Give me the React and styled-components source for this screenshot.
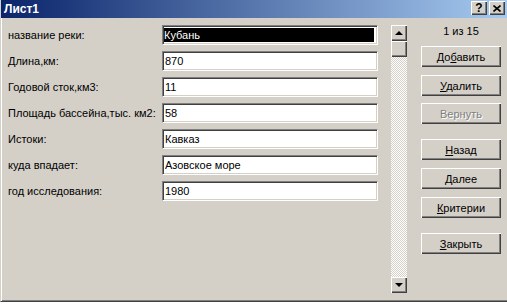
import styled, { createGlobalStyle } from "styled-components"

const GlobalStyle = createGlobalStyle`
  body {
    margin: 0;
    overflow: hidden;
    background: #ffffff;
    font-family: "Liberation Sans", Arial, sans-serif;
  }
`

const Window = styled.div`
  width: 507px;
  height: 302px;
  box-sizing: border-box;
  background: #d4d0c8;
  border-left: 1px solid #d4d0c8;
  border-bottom: 1px solid #404040;
  box-shadow: inset 1px 0 #ffffff, inset 0 -1px #808080;
  display: flex;
  flex-direction: column;
`

const TitleBar = styled.div`
  height: 18px;
  background: linear-gradient(to right, #0a246a, #a6caf0);
  display: flex;
  align-items: center;
  justify-content: space-between;
  padding: 0 2px 0 3px;
`

const Title = styled.span`
  color: #ffffff;
  font-weight: bold;
  font-size: 12px;
`

const TitleButtons = styled.div`
  display: flex;
  gap: 2px;
  margin-top: -2px;
`

const CapButton = styled.div`
  width: 16px;
  height: 14px;
  box-sizing: border-box;
  background: #d4d0c8;
  box-shadow: inset 1px 1px #ffffff, inset -1px -1px #404040, inset -2px -2px #808080;
  display: flex;
  align-items: center;
  justify-content: center;
  font-weight: bold;
  font-size: 12px;
  color: #000;
`

const Body = styled.div`
  flex: 1;
  display: flex;
  padding: 7px 0 0 7px;
`

const Form = styled.div`
  display: flex;
  flex-direction: column;
  gap: 6px;
  width: 371px;
`

const Row = styled.div`
  display: flex;
  align-items: center;
  height: 20px;
`

const Label = styled.span`
  width: 154px;
  font-size: 11px;
  color: #000;
  white-space: nowrap;
`

const Field = styled.div`
  width: 216px;
  height: 20px;
  box-sizing: border-box;
  background: #ffffff;
  border-top: 1px solid #808080;
  border-left: 1px solid #808080;
  border-bottom: 1px solid #ffffff;
  border-right: 1px solid #ffffff;
  box-shadow: inset 1px 1px #404040, inset -1px -1px #d4d0c8;
  padding: 2px 2px;
  font-size: 11px;
  line-height: 14px;
  color: #000;
`

const Selected = styled.div`
  background: #000000;
  color: #ffffff;
  height: 14px;
  margin: 0 0 0 -1px;
  width: 210px;
`

const ScrollBar = styled.div`
  width: 16px;
  height: 268px;
  margin-left: 12px;
  display: flex;
  flex-direction: column;
  background: repeating-conic-gradient(#ffffff 0 25%, #d4d0c8 0 50%) 0 0 / 2px 2px;
`

const ScrollBtn = styled.div`
  width: 16px;
  height: 16px;
  box-sizing: border-box;
  background: #d4d0c8;
  box-shadow: inset 1px 1px #ffffff, inset -1px -1px #404040, inset -2px -2px #808080;
  display: flex;
  align-items: center;
  justify-content: center;
`

const Track = styled.div`
  flex: 1;
`

const Arrow = styled.div`
  width: 0;
  height: 0;
  border-left: 4px solid transparent;
  border-right: 4px solid transparent;
  ${({ $down }) => ($down ? "border-top: 4px solid #000;" : "border-bottom: 4px solid #000;")}
`

const Side = styled.div`
  width: 80px;
  margin-left: 14px;
  display: flex;
  flex-direction: column;
`

const Counter = styled.div`
  height: 14px;
  text-align: center;
  font-size: 11px;
  margin-bottom: 7px;
`

const Button = styled.div`
  height: 21px;
  box-sizing: border-box;
  background: #d4d0c8;
  box-shadow: inset 1px 1px #ffffff, inset -1px -1px #404040, inset -2px -2px #808080;
  display: flex;
  align-items: center;
  justify-content: center;
  font-size: 11px;
  color: ${({ $disabled }) => ($disabled ? "#808080" : "#000")};
  text-shadow: ${({ $disabled }) => ($disabled ? "1px 1px #ffffff" : "none")};
  margin-bottom: ${({ $gap }) => $gap}px;
`

const Under = styled.span`
  text-decoration: underline;
`

const Sheet = styled.div`
  height: 2px;
  background: #ffffff;
`

const rows = [
  ["название реки:", "Кубань"],
  ["Длина,км:", "870"],
  ["Годовой сток,км3:", "11"],
  ["Площадь бассейна,тыс. км2:", "58"],
  ["Истоки:", "Кавказ"],
  ["куда впадает:", "Азовское море"],
  ["год исследования:", "1980"],
]

const buttons = [
  { pre: "До", u: "б", post: "авить", gap: 8 },
  { pre: "", u: "У", post: "далить", gap: 7 },
  { pre: "Вернуть", u: "", post: "", gap: 15, disabled: true },
  { pre: "", u: "Н", post: "азад", gap: 8 },
  { pre: "", u: "Д", post: "алее", gap: 8 },
  { pre: "", u: "К", post: "ритерии", gap: 15 },
  { pre: "", u: "З", post: "акрыть", gap: 0 },
]

export default function App() {
  return (
    <>
      <GlobalStyle />
      <Window>
        <TitleBar>
          <Title>Лист1</Title>
          <TitleButtons>
            <CapButton>?</CapButton>
            <CapButton>
              <svg width="8" height="7" viewBox="0 0 8 7">
                <path d="M0.5 0.5 L7.5 6.5 M7.5 0.5 L0.5 6.5" stroke="#000" strokeWidth="1.6" />
              </svg>
            </CapButton>
          </TitleButtons>
        </TitleBar>
        <Body>
          <Form>
            {rows.map(([label, value], i) => (
              <Row key={label}>
                <Label>{label}</Label>
                <Field>{i === 0 ? <Selected>{value}</Selected> : value}</Field>
              </Row>
            ))}
          </Form>
          <ScrollBar>
            <ScrollBtn>
              <Arrow />
            </ScrollBtn>
            <ScrollBtn />
            <Track />
            <ScrollBtn>
              <Arrow $down />
            </ScrollBtn>
          </ScrollBar>
          <Side>
            <Counter>1 из 15</Counter>
            {buttons.map((b, i) => (
              <Button key={i} $gap={b.gap} $disabled={b.disabled}>
                <span>
                  {b.pre}
                  {b.u && <Under>{b.u}</Under>}
                  {b.post}
                </span>
              </Button>
            ))}
          </Side>
        </Body>
      </Window>
      <Sheet />
    </>
  )
}
